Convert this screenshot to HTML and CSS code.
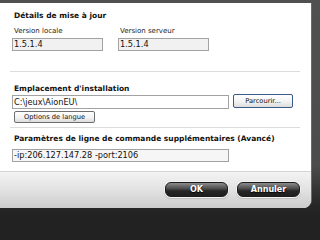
FILE: index.html
```html
<!DOCTYPE html>
<html lang="fr">
<head>
<meta charset="utf-8">
<title>Options</title>
<link rel="stylesheet" href="styles.css">
</head>
<body>
<div class="frame">
  <div class="panel">
    <div class="content">
      <div class="title">Détails de mise à jour</div>
      <div class="versions">
        <div class="field">
          <div class="label">Version locale</div>
          <div class="input ro w-ver">1.5.1.4</div>
        </div>
        <div class="field">
          <div class="label">Version serveur</div>
          <div class="input ro w-ver">1.5.1.4</div>
        </div>
      </div>
      <div class="sep sep1"></div>

      <div class="title t2">Emplacement d'installation</div>
      <div class="pathrow">
        <div class="input w-path">C:\jeux\AionEU\</div>
        <button class="btn browse">Parcourir...</button>
      </div>
      <button class="btn lang">Options de langue</button>
      <div class="sep sep2"></div>

      <div class="title t3">Paramètres de ligne de commande supplémentaires (Avancé)</div>
      <div class="input cmd w-path">-ip:206.127.147.28 -port:2106</div>
    </div>
    <div class="footer">
      <button class="dark">OK</button>
      <button class="dark">Annuler</button>
    </div>
  </div>
</div>
</body>
</html>
```
FILE: styles.css
```css
html, body {
  margin: 0;
  padding: 0;
  width: 320px;
  height: 217px;
  overflow: hidden;
  background: #222;
}
.frame {
  width: 320px;
  height: 217px;
  box-sizing: border-box;
  padding: 3px 9px 9px 0;
  background: linear-gradient(#505050 0, #4c4c4c 165px, #262626 205px, #222 217px);
  font-family: "DejaVu Sans", Verdana, sans-serif;
  color: #000;
}
.panel {
  width: 311px;
  height: 205px;
  background: #fff;
  border-bottom-right-radius: 8px;
  overflow: hidden;
  display: flex;
  flex-direction: column;
  box-shadow: 1px 0 0 #6a6a6a;
}
.content {
  flex: 1;
  padding: 8px 0 0 12px;
  display: flex;
  flex-direction: column;
  align-items: flex-start;
}
.title {
  font-weight: bold;
  font-size: 7.5px;
  line-height: 10px;
  height: 10px;
  padding-left: 2px;
  color: #111;
  white-space: nowrap;
}
.versions {
  display: flex;
  gap: 15px;
  margin-top: 5px;
}
.field {
  display: flex;
  flex-direction: column;
}
.label {
  font-size: 7px;
  line-height: 10px;
  height: 10px;
  padding-left: 2px;
  margin-bottom: 2px;
  color: #222;
}
.input {
  box-sizing: border-box;
  height: 13px;
  border: 1px solid #a2a2a2;
  background: #fff;
  font-size: 8.2px;
  line-height: 11px;
  padding-left: 1px;
  white-space: nowrap;
  color: #111;
}
.ro {
  background: #f1f1f1;
}
.w-ver {
  width: 91px;
}
.w-path {
  width: 217px;
}
.sep {
  width: 290px;
  height: 1px;
  background: #dcdcdc;
  margin-left: -2px;
}
.sep1 {
  margin-top: 20px;
}
.t2 {
  margin-top: 12px;
}
.pathrow {
  display: flex;
  align-items: flex-start;
  gap: 4px;
}
.pathrow .input {
  height: 14px;
  margin-top: 1px;
  line-height: 12px;
}
.btn {
  box-sizing: border-box;
  font-family: "DejaVu Sans", Verdana, sans-serif;
  font-size: 6.7px;
  color: #111;
  padding: 0;
  margin: 0;
  border-radius: 2px;
  background: linear-gradient(#ffffff, #f1f1f1 60%, #dcdcdc);
}
.browse {
  width: 60px;
  height: 14px;
  border: 1px solid #3b5a8a;
}
.lang {
  width: 81px;
  height: 12px;
  margin: 2px 0 0 2px;
  border: 1px solid #6e6e6e;
}
.sep2 {
  margin-top: 4px;
}
.t3 {
  margin-top: 6px;
}
.cmd {
  margin-top: 5px;
  background: #f6f6f6;
}
.footer {
  height: 37px;
  box-sizing: border-box;
  border-top: 1px solid #d4d4d4;
  background: linear-gradient(#f3f3f3, #e2e2e2 50%, #cbcbcb);
  display: flex;
  justify-content: flex-end;
  align-items: flex-start;
  gap: 9px;
  padding: 10px 11px 0 0;
}
.dark {
  box-sizing: border-box;
  width: 63px;
  height: 15px;
  border: 1px solid #1c1c1c;
  border-radius: 6px;
  background: linear-gradient(#8c8c8c, #4a4a4a 45%, #262626 60%, #1e1e1e);
  box-shadow: 0 0 0 1px #f2f2f2, 0 1px 1px 1px #bdbdbd;
  color: #fff;
  font-family: "DejaVu Sans", Verdana, sans-serif;
  font-weight: bold;
  font-size: 8px;
  line-height: 12px;
  padding: 0;
  text-shadow: 0 1px 1px #000;
}
```
